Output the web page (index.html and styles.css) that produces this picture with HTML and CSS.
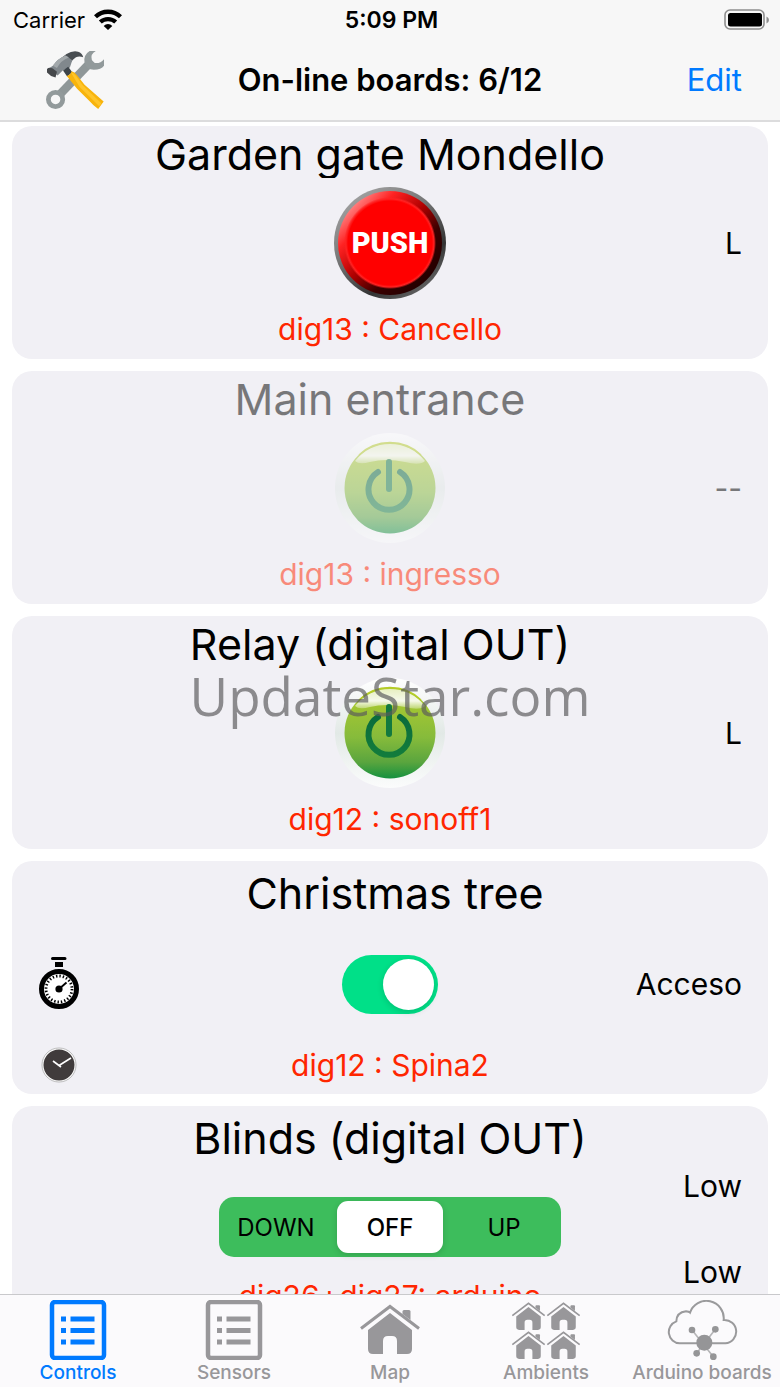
FILE: index.html
```html
<!DOCTYPE html>
<html lang="en">
<head>
<meta charset="utf-8">
<meta name="viewport" content="width=device-width, initial-scale=1">
<title>On-line boards</title>
<link rel="stylesheet" href="styles.css">
</head>
<body>
<svg class="defs" aria-hidden="true">
  <defs>
    <linearGradient id="green" x1="0" y1="0" x2="0" y2="1">
      <stop offset="0" stop-color="#b2cc2e"/><stop offset=".55" stop-color="#86bb3b"/><stop offset=".82" stop-color="#5aa53e"/><stop offset="1" stop-color="#15913f"/>
    </linearGradient>
    <linearGradient id="gloss" x1="0" y1="0" x2="0" y2="1">
      <stop offset="0" stop-color="#fff" stop-opacity=".7"/><stop offset=".6" stop-color="#fff" stop-opacity=".9"/><stop offset="1" stop-color="#fff" stop-opacity=".3"/>
    </linearGradient>
    <linearGradient id="glyph" x1="0" y1="0" x2="0" y2="1">
      <stop offset="0" stop-color="#0b6b3c"/><stop offset="1" stop-color="#127c3c"/>
    </linearGradient>
    <linearGradient id="halo" x1="0" y1="0" x2="0" y2="1">
      <stop offset="0" stop-color="#fff"/><stop offset=".5" stop-color="#e2e9e6"/><stop offset="1" stop-color="#fbfcfc"/>
    </linearGradient>
    <symbol id="power" viewBox="0 0 112 112">
      <circle cx="56" cy="56" r="55" fill="url(#halo)"/>
      <circle cx="56" cy="56" r="45.500" fill="url(#green)"/>
      <path d="M21 29Q35 12 56 12T91 29Q86 34 71 30Q52 26 36 30Q25 33 21 29Z" fill="url(#gloss)"/>
      <path d="M25 23A45 45 0 0 1 87 23" fill="none" stroke="#b5cc27" stroke-width="1.500"/>
      <path d="M44 40A20.500 20.500 0 1 0 66 40" fill="none" stroke="url(#glyph)" stroke-width="6" stroke-linecap="round"/>
      <path d="M52 30a3 3 0 0 1 6 0V57a3 3 0 0 1-6 0Z" fill="#13793f"/>
    </symbol>
    <symbol id="list" viewBox="0 0 56 60">
      <rect x="2" y="2" width="52" height="56" rx="3" fill="none" stroke="currentColor" stroke-width="4.500"/>
      <path d="M11 16.500h5v5h-5zM20.500 16.500h24v5h-24zM11 28h5v5h-5zM20.500 28h24v5h-24zM11 39.500h5v5h-5zM20.500 39.500h24v5h-24z" fill="currentColor"/>
    </symbol>
    <symbol id="house" viewBox="0 0 60 52">
      <path d="M1 24.500L30 2.500L59 24.500" fill="none" stroke="currentColor" stroke-width="3"/>
      <path d="M42.500 7.500q0-1.500 1.500-1.500h5q1.500 0 1.500 1.500V16L42.500 10z" fill="currentColor"/>
      <path d="M8 26L30 9L52 26V45q0 5-5 5H37V37q0-5-5-5H28q-5 0-5 5V50H13q-5 0-5-5z" fill="currentColor"/>
    </symbol>
  </defs>
</svg>

<div class="app">
  <header class="top">
    <div class="status">
      <span class="carrier">Carrier
        <svg class="wifi" viewBox="0 0 28 21" aria-hidden="true">
          <path d="M1.500 7.800A18 18 0 0 1 26.500 7.800M6.300 13A11.500 11.500 0 0 1 21.700 13" fill="none" stroke="#000" stroke-width="4.300"/>
          <path d="M14 21L9.700 16.900A6 6 0 0 1 18.300 16.900Z"/>
        </svg>
      </span>
      <time class="clock">5:09 PM</time>
      <svg class="battery" viewBox="0 0 46 22" role="img" aria-label="Battery full">
        <rect x="1" y="1" width="39" height="19" rx="5" fill="none" stroke="#8e8e8e" stroke-width="1.600"/>
        <rect x="4" y="4" width="34" height="13.500" rx="2.500"/>
        <path d="M42.500 7.500q2.500 1 2.500 3.500t-2.500 3.500z" fill="#8e8e8e"/>
      </svg>
    </div>
    <div class="navbar">
      <button class="tools" type="button" aria-label="Tools">
        <svg viewBox="0 0 170 170" aria-hidden="true">
          <path d="M40 128L122 42" stroke="#8f9798" stroke-width="25"/>
          <circle cx="28" cy="142" r="21" fill="#f7f7f7" stroke="#929a9b" stroke-width="14"/>
          <path d="M128 0A31 31 0 0 0 113 35Q118 53 140 55Q162 54 170 43V24Q158 38 143 35Q130 27 134 12Q138 4 146 0Z" fill="#929a9b"/>
          <path d="M60 9Q78-2 94 2Q106 6 109 18Q91 11 79 26L68 38L48 18Z" fill="#484d51"/>
          <path d="M20 43Q34 22 58 13L77 27L70 48L49 57L34 72L8 51Z" fill="#81888d"/>
          <path d="M20 43Q34 22 58 13L67 19Q44 27 32 50Z" fill="#a2a8ab"/>
          <path d="M3 53Q8 47 20 51L32 61L28 78Q12 74 3 63Z" fill="#45484b"/>
          <path d="M50 57L65 46L77 62L62 75Z" fill="#3d444a"/>
          <path d="M61 73Q72 70 75 59Q84 61 91 71L113 99L169 148L153 170Q139 160 128 147L91 111Z" fill="#f8b40c"/>
          <path d="M73 63Q81 63 87 72L107 100L162 153L156 162L98 105Z" fill="#ffc52a"/>
        </svg>
      </button>
      <h1 class="heading">On-line boards: 6/12</h1>
      <button class="edit" type="button">Edit</button>
    </div>
  </header>

  <main class="list">
    <section class="card">
      <h2 class="title">Garden gate Mondello</h2>
      <button class="round push" type="button">PUSH</button>
      <span class="state">L</span>
      <p class="pin">dig13 : Cancello</p>
    </section>
    <section class="card offline">
      <h2 class="title">Main entrance</h2>
      <button class="round" type="button" aria-label="Main entrance" disabled><svg><use href="#power"/></svg></button>
      <span class="state">--</span>
      <p class="pin">dig13 : ingresso</p>
    </section>
    <section class="card">
      <h2 class="title">Relay (digital OUT)</h2>
      <button class="round" type="button" aria-label="Relay"><svg><use href="#power"/></svg></button>
      <span class="state">L</span>
      <p class="pin">dig12 : sonoff1</p>
    </section>
    <section class="card timed">
      <h2 class="title" id="tree">Christmas tree</h2>
      <button class="timer" type="button" aria-label="Timer">
        <svg viewBox="0 0 42 54" aria-hidden="true">
          <path d="M13 1.500q0-1.500 1.500-1.500h12.500q1.500 0 1.500 1.500v0q0 1.500-1.500 1.500h-12.500q-1.500 0-1.500-1.500zM17 5h8v5h-8z"/>
          <circle cx="21" cy="32" r="17.500" fill="#fff" stroke="#000" stroke-width="5"/>
          <circle cx="21" cy="32" r="13" fill="none" stroke="#000" stroke-width="2.800" stroke-dasharray="1.400 2.003"/>
          <circle cx="21" cy="32" r="3.600"/>
          <path d="M21 32L28.500 25.500" stroke="#000" stroke-width="1.800"/>
        </svg>
      </button>
      <input class="switch" type="checkbox" role="switch" aria-labelledby="tree" checked>
      <span class="state">Acceso</span>
      <button class="schedule" type="button" aria-label="Schedule">
        <svg viewBox="0 0 36 36" aria-hidden="true">
          <circle cx="18" cy="18" r="17" fill="#fff" stroke="#aaa" stroke-width=".8"/>
          <circle cx="18" cy="18" r="15.500" fill="#403b3c"/>
          <path d="M18 18.500L30 11M20 20L12 14" fill="none" stroke="#fff" stroke-width="1.600"/>
        </svg>
      </button>
      <p class="pin">dig12 : Spina2</p>
    </section>
    <section class="card blinds">
      <h2 class="title">Blinds (digital OUT)</h2>
      <fieldset class="segments" aria-label="Blinds">
        <label class="segment"><input type="radio" name="blinds">DOWN</label>
        <label class="segment"><input type="radio" name="blinds" checked>OFF</label>
        <label class="segment"><input type="radio" name="blinds">UP</label>
      </fieldset>
      <div class="state levels"><span>Low</span><span>Low</span></div>
      <p class="pin">dig26+dig27: arduino</p>
    </section>
  </main>

  <nav class="tabs">
    <a class="tab active" href="#controls" aria-current="page"><svg class="icon" aria-hidden="true"><use href="#list"/></svg>Controls</a>
    <a class="tab" href="#sensors"><svg class="icon" aria-hidden="true"><use href="#list"/></svg>Sensors</a>
    <a class="tab" href="#map"><svg class="icon" aria-hidden="true"><use href="#house"/></svg>Map</a>
    <a class="tab" href="#ambients">
      <svg class="icon wide" viewBox="0 0 70 60" aria-hidden="true">
        <use href="#house" x="0" y="2" width="34" height="29"/><use href="#house" x="35" y="2" width="34" height="29"/>
        <use href="#house" x="0" y="31" width="34" height="29"/><use href="#house" x="35" y="31" width="34" height="29"/>
      </svg>Ambients</a>
    <a class="tab" href="#boards">
      <svg class="icon wide" viewBox="0 0 213 180" aria-hidden="true">
        <path d="M38 130A34 34 0 0 1 28 64Q29 37 57 34Q66 35 69 38A52 52 0 0 1 170 60A35 35 0 0 1 175 130Z" fill="none" stroke="#9a9a9c" stroke-width="6"/>
        <path d="M75 90L139 170M145 88L89 160" stroke="#b5b5b7" stroke-width="5"/>
        <g fill="#959597"><circle cx="112" cy="128" r="24"/><circle cx="75" cy="90" r="10"/><circle cx="145" cy="88" r="10"/><circle cx="89" cy="160" r="10"/><circle cx="139" cy="170" r="10"/></g>
      </svg>Arduino boards</a>
  </nav>
</div>
<div class="watermark">UpdateStar.com</div>
</body>
</html>
```
FILE: styles.css
```css
* {
  box-sizing: border-box;
}

body {
  margin: 0;
  background: #fff;
  color: #000;
  font-family: Inter, Roboto, sans-serif;
}

button {
  padding: 0;
  border: 0;
  background: none;
  font: inherit;
  cursor: pointer;
}

svg {
  display: block;
}

.defs {
  position: absolute;
  width: 0;
  height: 0;
}

.app {
  display: flex;
  flex-direction: column;
  height: 100vh;
}

/* Header */

.top {
  border-bottom: 2px solid #dcdcdd;
  background: #f7f7f7;
}

.status,
.navbar {
  display: grid;
  grid-template-columns: 1fr auto 1fr;
  align-items: center;
}

.status {
  height: 39px;
  padding: 0 10px 0 13px;
  font-size: 22px;
}

.carrier {
  display: flex;
  align-items: center;
  gap: 9px;
}

.wifi {
  width: 28px;
  height: 21px;
}

.clock {
  font-size: 23px;
  font-weight: 600;
}

.battery {
  justify-self: end;
  width: 46px;
  height: 22px;
}

.navbar {
  height: 81px;
  padding: 0 38px;
}

.tools {
  justify-self: start;
  width: 58px;
  height: 58px;
  margin-left: 8px;
}

.heading {
  margin: 0;
  font-size: 31px;
  font-weight: 600;
}

.edit {
  justify-self: end;
  color: #007aff;
  font-size: 31px;
}

/* Cards */

.list {
  display: flex;
  flex: 1;
  flex-direction: column;
  gap: 12px;
  min-height: 0;
  padding: 4px 12px;
  overflow-y: auto;
  scrollbar-width: none;
}

.card {
  display: grid;
  flex-shrink: 0;
  grid-template-rows: 61px 112px 60px;
  grid-template-columns: 1fr auto 1fr;
  align-items: center;
  min-height: 233px;
  padding: 0 26px;
  border-radius: 20px;
  background: #f1f0f5;
}

.title {
  grid-row: 1;
  grid-column: 1 / -1;
  align-self: start;
  height: 52px;
  padding-right: 20px;
  margin: 0;
  overflow: hidden;
  font-size: 43px;
  font-weight: 400;
  line-height: 56px;
  text-align: center;
}

.round {
  grid-row: 2;
  grid-column: 2;
  justify-self: center;
  width: 112px;
  height: 112px;
  border-radius: 50%;
}

.round svg {
  width: 112px;
  height: 112px;
}

.push {
  border: 4px solid transparent;
  background:
    radial-gradient(circle at 50% 50%, #f00 0 42px, #f22 44px, transparent 46px) padding-box,
    linear-gradient(135deg, #ff9a9a 10%, #f22 28%, #b00000 48%, #3a0000 66%, #180000 95%) padding-box,
    linear-gradient(145deg, #aaa 5%, #777 40%, #333 70%, #777 95%) border-box;
  color: #fff;
  font-family: Roboto, sans-serif;
  font-size: 29px;
  font-weight: 900;
}

.state {
  grid-row: 2;
  grid-column: 3;
  justify-self: end;
  font-size: 30px;
}

.pin {
  grid-row: 3;
  grid-column: 1 / -1;
  margin: 0;
  color: #ff2600;
  font-size: 30px;
  text-align: center;
}

.offline > * {
  opacity: .5;
}

/* Christmas tree */

.timed {
  grid-template-rows: 64px 118px 44px;
  align-content: start;
}

.timed .title,
.blinds .title {
  height: 64px;
  padding-right: 0;
  line-height: 64px;
}

.timed .title {
  padding-left: 10px;
}

.timer,
.schedule {
  grid-column: 1;
  justify-self: start;
  width: 42px;
}

.timer {
  grid-row: 2;
}

.schedule {
  grid-row: 3;
}

.timer svg {
  width: 42px;
  height: 54px;
}

.schedule svg {
  width: 36px;
  height: 36px;
  margin: 0 auto;
}

.switch {
  display: flex;
  grid-row: 2;
  grid-column: 2;
  align-items: center;
  width: 96px;
  height: 59px;
  padding: 4px;
  margin: 0;
  border-radius: 30px;
  background: #d8d8dc;
  appearance: none;
}

.switch::before {
  width: 51px;
  height: 51px;
  border-radius: 50%;
  background: #fff;
  box-shadow: 0 2px 6px rgb(0 0 0 / 15%);
  content: "";
}

.switch:checked {
  justify-content: flex-end;
  background: #00e088;
}

/* Blinds */

.blinds {
  grid-template-rows: 66px 110px 28px;
  align-content: start;
}

.segments {
  display: grid;
  grid-row: 2;
  grid-column: 2;
  grid-template-columns: repeat(3, 106px);
  gap: 8px;
  height: 60px;
  padding: 4px;
  margin: 0;
  border: 0;
  border-radius: 15px;
  background: #3dbd5c;
}

.segment {
  display: grid;
  place-items: center;
  border-radius: 11px;
  font-size: 24px;
  cursor: pointer;
}

.segment input {
  position: absolute;
  opacity: 0;
}

.segment:has(:checked) {
  background: #fff;
  box-shadow: 0 2px 6px rgb(0 0 0 / 15%);
  font-weight: 500;
}

.levels {
  display: flex;
  grid-row: 2 / 4;
  flex-direction: column;
  align-self: start;
  gap: 58px;
  line-height: 28px;
}

.blinds .pin {
  line-height: 28px;
}

/* Tab bar */

.tabs {
  display: grid;
  grid-template-columns: repeat(5, minmax(0, 1fr));
  border-top: 1px solid #c9c9cc;
  background: #fbfafc;
}

.tab {
  display: flex;
  flex-direction: column;
  align-items: center;
  gap: 1px;
  padding-top: 5px;
  padding-bottom: 2px;
  color: #98979a;
  font-size: 19px;
  font-weight: 500;
  line-height: 24px;
  text-decoration: none;
  white-space: nowrap;
}

.tab.active {
  color: #007aff;
}

.icon {
  width: 60px;
  height: 60px;
}

.icon.wide {
  width: 71px;
}

/* Watermark */

.watermark {
  display: grid;
  position: fixed;
  inset: 0;
  place-items: center;
  padding-top: 4px;
  color: rgb(90 90 92 / 68%);
  font-family: "Open Sans", "Noto Sans", sans-serif;
  font-size: 53px;
  pointer-events: none;
}
```
